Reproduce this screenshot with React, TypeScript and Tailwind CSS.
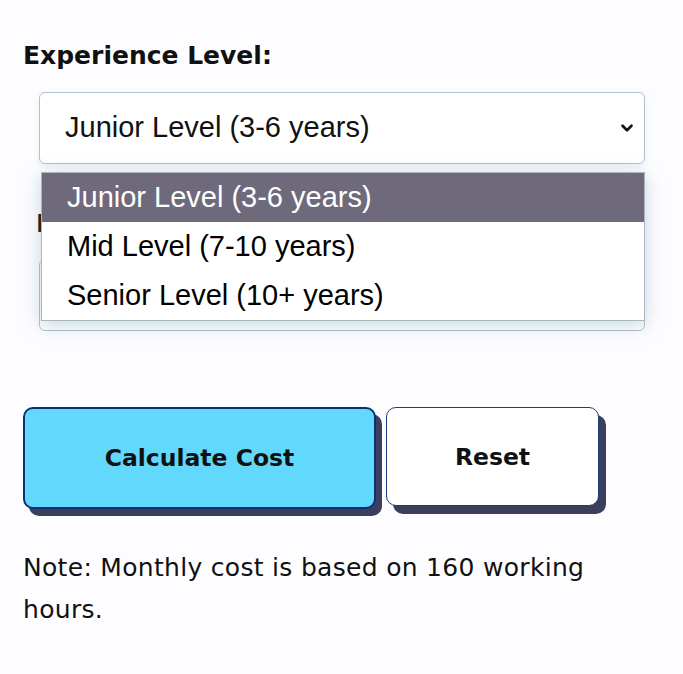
import { ChevronDown } from 'lucide-react';

const options = ['Junior Level (3-6 years)', 'Mid Level (7-10 years)', 'Senior Level (10+ years)'];

export default function App() {
  return (
    <div className="min-h-[674px] w-[683px] bg-[#fdfdff] font-['DejaVu_Sans',sans-serif] text-[#111]">
      <div className="relative px-[23px] pt-[38px]">
        <h2 className="text-[25px] font-bold leading-[36px]">Experience Level:</h2>

        <div className="mt-[18px] pl-[16px] pr-[15px]">
          <div className="flex h-[72px] items-center justify-between rounded-[6px] border border-[#b4c0cd] bg-white pl-[25px] pr-[8px] shadow-[0_2px_6px_rgba(120,150,170,0.15)] font-['Liberation_Sans',Arial,sans-serif] text-[29px]">
            <span>Junior Level (3-6 years)</span>
            <ChevronDown className="h-[18px] w-[18px]" strokeWidth={3.5} />
          </div>
        </div>

        {/* second field, mostly under the open list */}
        <div className="mt-[44px] pl-[13px] text-[25px] font-bold leading-[32px]">Hourly Rate:</div>
        <div className="mt-[19px] pl-[16px] pr-[15px]">
          <div className="h-[72px] rounded-[6px] border border-[#b4c0cd] bg-white" />
        </div>

        {/* open dropdown list */}
        <ul className="absolute left-[41px] top-[172px] w-[604px] border border-[#aab6c2] bg-white font-['Liberation_Sans',Arial,sans-serif] text-[29px] shadow-[0_4px_18px_rgba(90,140,160,0.35)]">
          {options.map((o, i) => (
            <li
              key={o}
              className={
                i === 0
                  ? 'flex h-[49px] items-center bg-[#6e6a7c] pl-[25px] text-white'
                  : 'flex h-[49px] items-center pl-[25px] text-black'
              }
            >
              {o}
            </li>
          ))}
        </ul>

        <div className="mt-[76px] flex gap-[10px]">
          <button className="h-[102px] w-[353px] rounded-[10px] border-2 border-[#0d2f73] bg-[#62d8fd] pt-[2px] text-[23.5px] font-bold text-[#111] shadow-[6px_7px_0_#3b3f5e]">
            Calculate Cost
          </button>
          <button className="h-[99px] w-[213px] rounded-[10px] border-[1.5px] border-[#1b3d7a] bg-white pt-[2px] text-[23.5px] font-bold text-[#111] shadow-[7px_8px_0_#3b3f5e]">
            Reset
          </button>
        </div>

        <p className="mt-[38px] w-[590px] text-[25px] leading-[42px] tracking-[0.3px]">
          Note: Monthly cost is based on 160 working hours.
        </p>
      </div>
    </div>
  );
}
